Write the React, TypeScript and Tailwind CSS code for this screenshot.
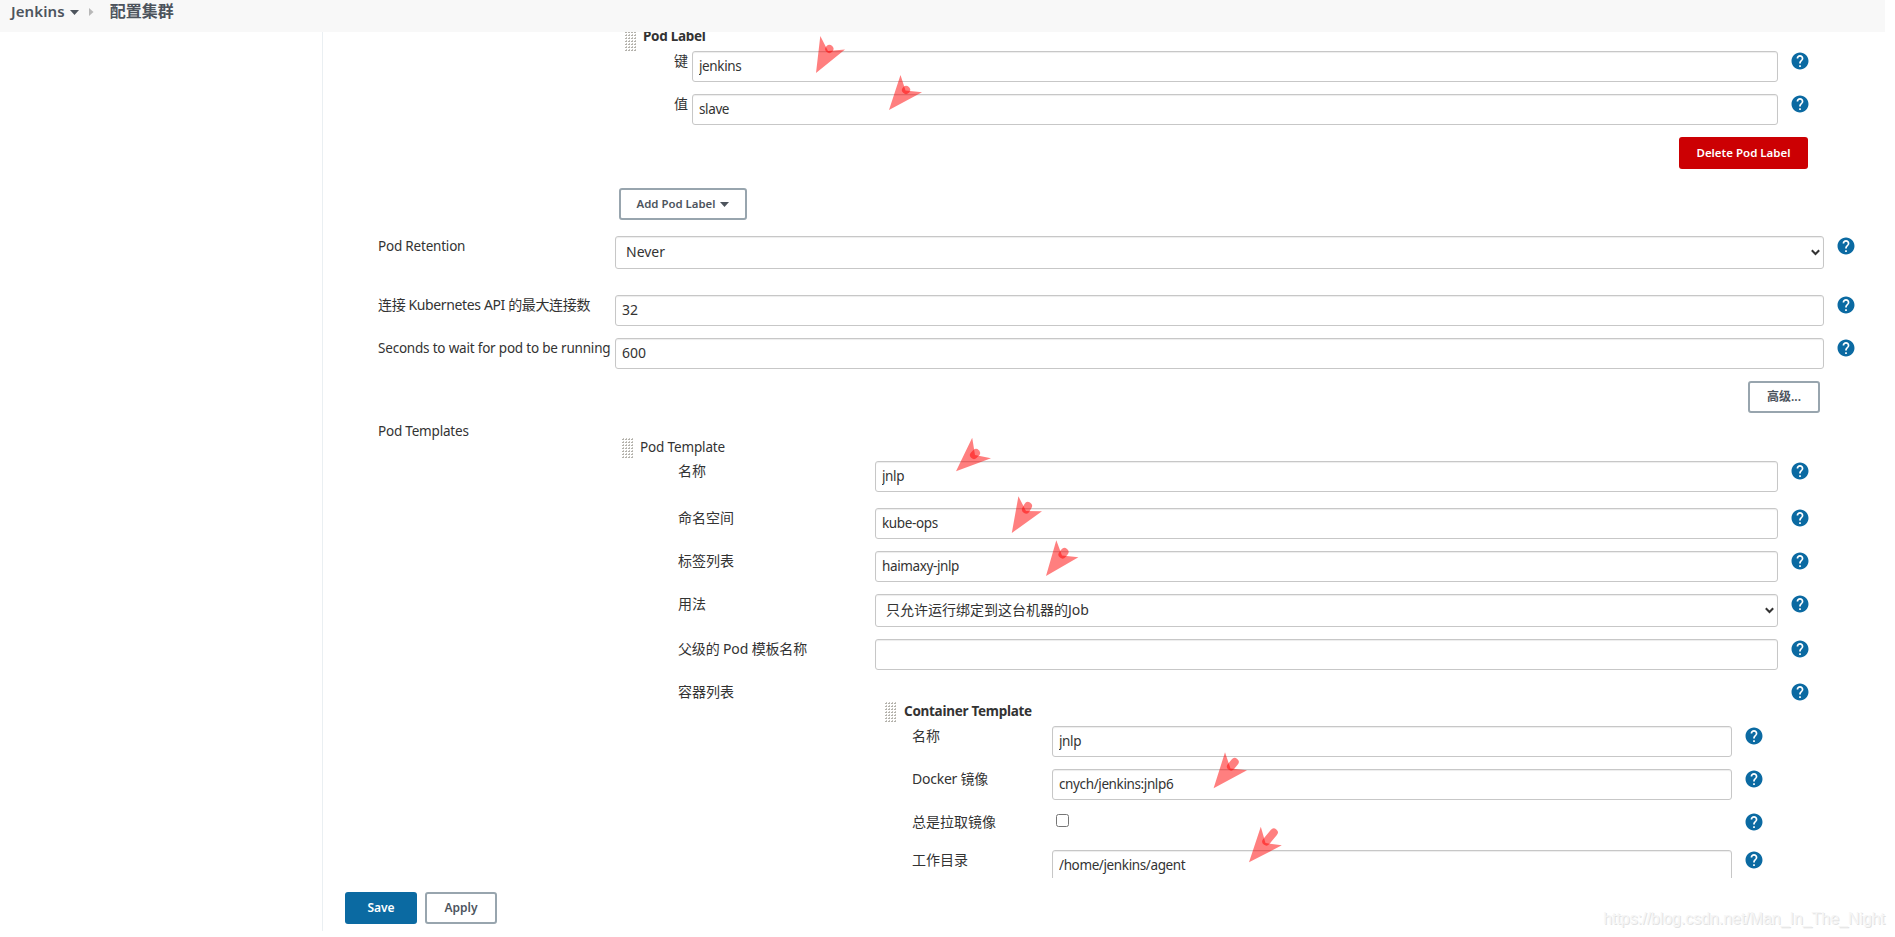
import { ReactNode } from "react";
import clsx from "clsx";

function HelpIcon() {
  return (
    <span className="flex h-5 w-[18px] shrink-0 items-center justify-center">
      <svg className="h-[18px] w-[18px]" viewBox="1.4 1.4 21.2 21.2">
        <circle cx="12" cy="12" r="9" fill="#fff" />
        <path
          d="M12 2C6.48 2 2 6.48 2 12s4.48 10 10 10 10-4.48 10-10S17.52 2 12 2zm1 17h-2v-2h2v2zm2.07-7.75l-.9.92C13.45 12.9 13 13.5 13 15h-2v-.5c0-1.1.45-2.1 1.17-2.83l1.24-1.26c.37-.36.59-.86.59-1.41 0-1.1-.9-2-2-2s-2 .9-2 2H8c0-2.21 1.79-4 4-4s4 1.79 4 4c0 .88-.36 1.68-.93 2.25z"
          fill="#0b6aa2"
        />
      </svg>
    </span>
  );
}

function Grip() {
  return (
    <svg className="h-5 w-[11px] shrink-0" viewBox="0 0 11 20" shapeRendering="crispEdges">
      {Array.from({ length: 28 }).map((_, i) => {
        const x = (i % 4) * 3;
        const y = Math.floor(i / 4) * 3;
        return (
          <g key={i}>
            <rect x={x} y={y + 1} width="2" height="1" fill="#b3b1ab" />
            <rect x={x + 1} y={y} width="1" height="1" fill="#c4c2bc" />
          </g>
        );
      })}
    </svg>
  );
}

function Caret({ className }: { className?: string }) {
  return (
    <svg className={clsx("h-[5px] w-[9px]", className)} viewBox="0 0 9 5">
      <path d="M0 0h9L4.5 5z" fill="currentColor" />
    </svg>
  );
}

const fieldClass =
  "w-full rounded-[3px] border border-[#c7c7c7] bg-white text-[#333] shadow-[inset_0_1px_1px_rgba(0,0,0,0.075)] outline-none";

function TextField({ value }: { value: string }) {
  const numeric = /^\d+$/.test(value);
  return (
    <input
      type="text"
      defaultValue={value}
      className={clsx(
        fieldClass,
        "block h-[31px] px-1.5 pb-0.5",
        numeric ? "text-sm" : "text-[13.5px] tracking-[-0.38px]"
      )}
    />
  );
}

function SelectField({ value }: { value: string }) {
  return (
    <div className={clsx(fieldClass, "flex h-[33px] items-center justify-between pl-2.5 pr-[3px] text-sm")}>
      <span className="-mt-px">{value}</span>
      <svg className="h-[7px] w-[9px]" viewBox="0 0 9 7">
        <path d="M.8 1.2 4.5 5l3.7-3.8" fill="none" stroke="#333" strokeWidth="2" />
      </svg>
    </div>
  );
}

type RowProps = {
  label: string;
  className: string;
  labelClass: string;
  children?: ReactNode;
};

function Row({ label, className, labelClass, children }: RowProps) {
  return (
    <div className={clsx("flex items-start", className)}>
      <div className={clsx("shrink-0 whitespace-nowrap leading-5", labelClass)}>{label}</div>
      <div className="min-w-0 flex-1">{children}</div>
      <div className="ml-[13px]">
        <HelpIcon />
      </div>
    </div>
  );
}

function Button({ children, className }: { children: ReactNode; className: string }) {
  return (
    <button
      type="button"
      className={clsx("flex h-8 items-center justify-center whitespace-nowrap rounded-[3px] font-semibold", className)}
    >
      {children}
    </button>
  );
}

const outline = "border-2 border-[#98a5ae] bg-white text-[#4d545d]";

// head outline and tail of every marker, in page coordinates
const arrows = [
  { head: "820.3,36 816,73 845,49.5 828,51", tail: "M829.3 49l.1-.1" },
  { head: "900.5,75 889,110 922,92.3 905.5,90.5", tail: "M906 90l.1-.1" },
  { head: "972.2,437.7 956,471.3 991,458.3 975,455", tail: "M974 455l2-2" },
  { head: "1018.4,496.3 1011.8,533 1042,511.3 1026,511", tail: "M1026 509.5l2-3.5" },
  { head: "1056.3,540.3 1046,576 1078.4,557.3 1062,555.5", tail: "M1062.5 554.5l2-2.5" },
  { head: "1225,752.3 1213.6,788.3 1247,770.3 1230.5,768.5", tail: "M1231 766.5l3.7-4.5" },
  { head: "1260.8,826.7 1249,862.3 1281.8,845.3 1265.5,843", tail: "M1266.3 841.5l7.5-9" },
];

export default function App() {
  return (
    <div className="relative h-[937px] w-[1895px] overflow-hidden bg-white font-['Noto_Sans','Noto_Sans_CJK_SC',sans-serif] text-sm text-[#333]">
      {/* Breadcrumbs */}
      <header className="flex h-8 w-[1885px] items-start bg-[#f8f8f8] pl-[11px] text-[15px] font-semibold leading-[22px] text-[#4d545d]">
        <span className="tracking-[0.1px]">Jenkins</span>
        <Caret className="ml-[5px] mt-[10px]" />
        <svg className="ml-2.5 mt-2 h-2 w-[5px]" viewBox="0 0 5 8">
          <path d="M0 0v8l4.5-4z" fill="#b8b8b8" />
        </svg>
        <span className="ml-4 text-base leading-[22px]">配置集群</span>
      </header>

      <div className="flex">
        <aside className="w-[322px] shrink-0" />
        <main className="h-[899px] w-[1573px] border-l border-[#eaeff2]">
          <div className="h-[846px] overflow-hidden pl-[55px]">
            {/* Pod label */}
            <div className="w-[1431px] pl-[247px]">
              <div className="flex h-[19px] items-end text-[13.5px] font-bold tracking-[-0.3px]">
                <Grip />
                <span className="-translate-y-[5px] pl-[7px] leading-5">Pod Label</span>
              </div>
              <Row label="键" className="h-[43px]" labelClass="w-[67px] pl-[49px]">
                <TextField value="jenkins" />
              </Row>
              <Row label="值" className="h-[43px]" labelClass="w-[67px] pl-[49px]">
                <TextField value="slave" />
              </Row>
              <div className="flex h-[51px] justify-end pr-px">
                <Button className="w-[129px] bg-[#cc0003] text-[11.5px] text-white">Delete Pod Label</Button>
              </div>
            </div>
            <div className="h-12 pl-[241px]">
              <Button className={clsx("w-32 text-[11.4px]", outline)}>
                Add Pod Label
                <Caret className="ml-[5px]" />
              </Button>
            </div>

            {/* Cloud settings */}
            <div className="w-[1477px]">
              <Row label="Pod Retention" className="h-[59px]" labelClass="w-[237px] text-[13.5px] tracking-[-0.2px]">
                <SelectField value="Never" />
              </Row>
              <Row
                label="连接 Kubernetes API 的最大连接数"
                className="h-[43px]"
                labelClass="w-[237px] tracking-[-0.37px]"
              >
                <TextField value="32" />
              </Row>
              <Row
                label="Seconds to wait for pod to be running"
                className="h-[43px]"
                labelClass="w-[237px] text-[13.5px] tracking-[-0.2px]"
              >
                <TextField value="600" />
              </Row>
              <div className="flex h-10 justify-end pr-[35px]">
                <Button className={clsx("w-[72px] text-xs", outline)}>高级...</Button>
              </div>
            </div>

            {/* Pod templates */}
            <div className="flex w-[1431px]">
              <div className="w-[244px] shrink-0 text-[13.5px] leading-5 tracking-[-0.2px]">Pod Templates</div>
              <div className="flex-1">
                <div className="flex h-10 pt-[17px]">
                  <Grip />
                  <span className="pl-[7px] text-[13.5px] leading-[18px] tracking-[-0.15px]">Pod Template</span>
                </div>
                <div className="pl-14">
                  <Row label="名称" className="h-[47px]" labelClass="w-[197px]">
                    <TextField value="jnlp" />
                  </Row>
                  <Row label="命名空间" className="h-[43px]" labelClass="w-[197px]">
                    <TextField value="kube-ops" />
                  </Row>
                  <Row label="标签列表" className="h-[43px]" labelClass="w-[197px]">
                    <TextField value="haimaxy-jnlp" />
                  </Row>
                  <Row label="用法" className="h-[45px]" labelClass="w-[197px]">
                    <SelectField value="只允许运行绑定到这台机器的Job" />
                  </Row>
                  <Row label="父级的 Pod 模板名称" className="h-[43px]" labelClass="w-[197px] tracking-[-0.15px]">
                    <TextField value="" />
                  </Row>
                  <Row label="容器列表" className="h-[200px]" labelClass="w-[207px]">
                    <div className="-mr-[15px] w-[878px]">
                      <div className="flex h-11 pt-5 text-[13.5px] font-bold tracking-[-0.28px]">
                        <Grip />
                        <span className="pl-2 leading-[18px]">Container Template</span>
                      </div>
                      <div className="pl-[27px]">
                        <Row label="名称" className="h-[43px]" labelClass="w-[140px]">
                          <TextField value="jnlp" />
                        </Row>
                        <Row label="Docker 镜像" className="h-[43px]" labelClass="w-[140px] tracking-[-0.25px]">
                          <TextField value="cnych/jenkins:jnlp6" />
                        </Row>
                        <Row label="总是拉取镜像" className="h-[38px]" labelClass="w-[140px]">
                          <input
                            type="checkbox"
                            className="ml-1 mt-0.5 block h-[13px] w-[13px] appearance-none rounded-[2.5px] border border-[#767676]"
                          />
                        </Row>
                        <Row label="工作目录" className="h-[43px]" labelClass="w-[140px]">
                          <TextField value="/home/jenkins/agent" />
                        </Row>
                      </div>
                    </div>
                  </Row>
                </div>
              </div>
            </div>
          </div>

          {/* Bottom buttons */}
          <div className="flex gap-2 pl-[22px] pt-3.5 text-xs">
            <Button className="w-[72px] bg-[#0b6aa2] text-white">Save</Button>
            <Button className={clsx("w-[72px]", outline)}>Apply</Button>
          </div>
        </main>
      </div>

      <svg className="pointer-events-none absolute inset-0 h-[937px] w-[1895px]" viewBox="0 0 1895 937">
        {arrows.map((arrow) => (
          <g key={arrow.head}>
            <polygon points={arrow.head} fill="#ff0000" fillOpacity="0.5" />
            <path d={arrow.tail} stroke="#ff0000" strokeOpacity="0.5" strokeWidth="8" strokeLinecap="round" />
          </g>
        ))}
      </svg>

      <div className="absolute bottom-1.5 right-2.5 whitespace-nowrap font-['Liberation_Sans',Arial,sans-serif] text-base tracking-[-0.05px] text-[#f6f6f6] [text-shadow:1px_1px_0_#e2e2e2]">
        https://blog.csdn.net/Man_In_The_Night
      </div>
    </div>
  );
}
